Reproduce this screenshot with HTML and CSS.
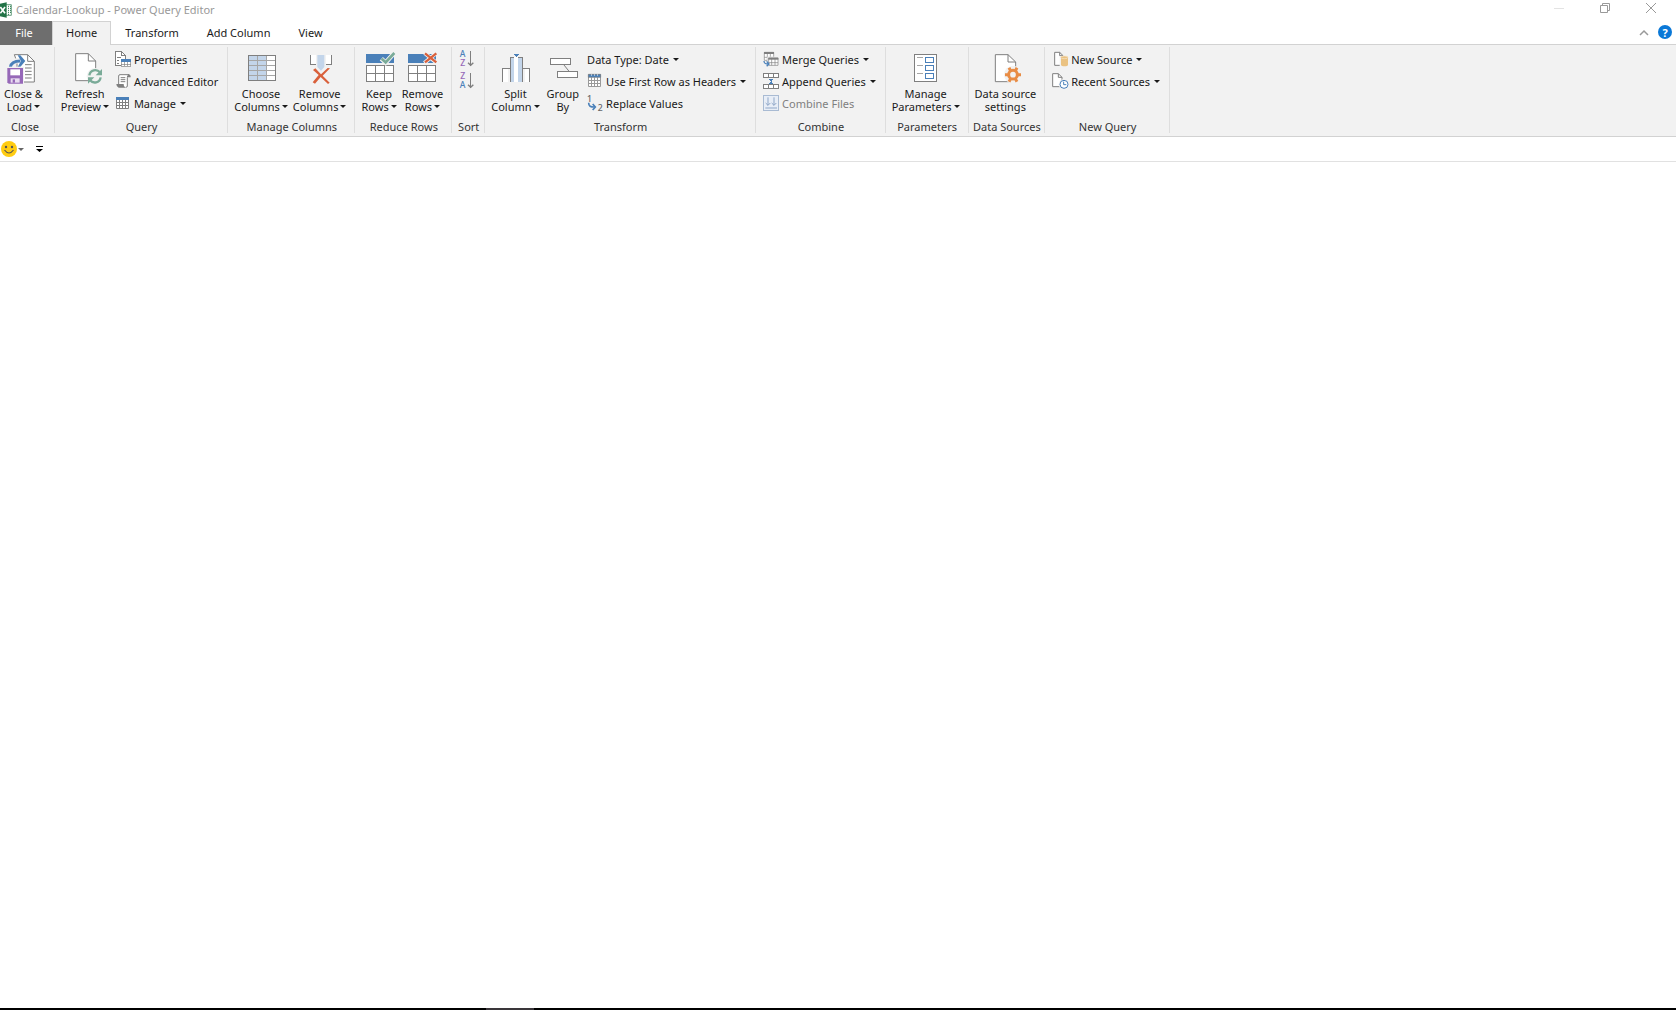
FILE: index.html
```html
<!DOCTYPE html>
<html lang="en">
<head>
<meta charset="utf-8">
<title>Calendar-Lookup - Power Query Editor</title>
<link rel="stylesheet" href="styles.css">
</head>
<body>
<header class="titlebar">
  <svg class="app-icon" viewBox="0 0 36 48" aria-hidden="true"><path fill="#fff" stroke="#217346" stroke-width="2" d="M14 8h20v32H14z"/><path stroke="#217346" stroke-width="3" d="M24 13h3M24 19h3M24 25h3M24 31h3M24 37h3M30 13h3M30 19h3M30 25h3M30 31h3"/><path fill="#217346" d="M0 5l20-4v46L0 43z"/><path stroke="#fff" stroke-width="5" d="M1 15l14 19M15 15L1 34"/></svg>
  <h1 class="title">Calendar-Lookup - Power Query Editor</h1>
  <div class="window-controls">
    <button class="win-btn" aria-label="Minimize" disabled><svg viewBox="0 0 10 10"><path stroke="#e3e3e3" d="M0 5.500h10"/></svg></button>
    <button class="win-btn" aria-label="Restore"><svg viewBox="0 0 10 10"><path fill="none" stroke="#999" d="M.5 2.500h7v7h-7zM2.500 2.500v-2h7v7h-2"/></svg></button>
    <button class="win-btn" aria-label="Close"><svg viewBox="0 0 10 10"><path stroke="#999" d="M0 0l10 10M10 0L0 10"/></svg></button>
  </div>
</header>

<nav class="tabs" aria-label="Ribbon tabs">
  <button class="tab tab-file">File</button>
  <button class="tab tab-active">Home</button>
  <button class="tab">Transform</button>
  <button class="tab">Add Column</button>
  <button class="tab">View</button>
  <div class="tab-tools">
    <button class="tool" aria-label="Collapse ribbon"><svg class="chevron" viewBox="0 0 8 5"><path fill="none" stroke="#999" stroke-width="1.500" d="M0 5l4-4 4 4"/></svg></button>
    <button class="tool help" aria-label="Help">?</button>
  </div>
</nav>

<main class="ribbon">
  <section class="group">
    <div class="items">
      <button class="big">
        <svg class="icon-lg" viewBox="0 0 96 96"><path fill="#fff" stroke="#7f7f7f" stroke-width="3" d="M22 8h40l20 20v62H30V30z"/><path fill="none" stroke="#7f7f7f" stroke-width="3" d="M62 8v20h20M54 38h20M54 48h20M54 58h20M54 68h20M54 78h20"/><path fill="none" stroke="#f2f2f2" stroke-width="16" d="M9 46c2-16 12-20 28-20"/><path fill="none" stroke="#4a80b9" stroke-width="9" d="M10 46c2-14 12-19 30-19"/><path fill="#4a80b9" d="M32 10h8l15 17-15 18h-8l10-18z"/><path fill="#f2f2f2" d="M-2 44h53v54H-2z"/><path fill="#9668b8" d="M1 48h47v47H5l-4-4z"/><path fill="#fff" d="M10 52h29v18H10z"/><path fill="#e8dcf0" d="M11 79h27v13H11z"/><path fill="#9668b8" d="M17 82h7v10h-7z"/></svg>
        <span class="label">Close &amp;<br>Load<i class="caret"></i></span>
      </button>
    </div>
    <h2 class="group-name">Close</h2>
  </section>

  <section class="group">
    <div class="items">
      <button class="big">
        <svg class="icon-lg" viewBox="0 0 96 96"><path fill="#fff" stroke="#7f7f7f" stroke-width="3" d="M20 5h38l22 22v59H20z"/><path fill="none" stroke="#7f7f7f" stroke-width="3" d="M58 5v22h22"/><circle cx="78" cy="73" r="25" fill="#f2f2f2"/><path fill="none" stroke="#7aab98" stroke-width="7" d="M61 70c3-17 22-20 32-9M95 76c-3 17-22 20-32 9"/><path fill="#7aab98" d="M99 51v19H80zM57 95V76h19z"/></svg>
        <span class="label">Refresh<br>Preview<i class="caret"></i></span>
      </button>
      <div class="stack">
        <button class="small"><svg class="icon-sm crisp" viewBox="0 0 48 48"><path fill="#fff" stroke="#7f7f7f" stroke-width="3" d="M2 2h18l11 11v31H2z"/><path fill="none" stroke="#7f7f7f" stroke-width="3" d="M20 2v11h11M6 18h5M6 27h5M6 36h5M13 18h5"/><path fill="#fff" stroke="#7f7f7f" stroke-width="2" d="M19 25h28v21H19zM19 39h28M28 25v21M38 25v21"/><path fill="#4a80b9" d="M18 24h30v8H18z"/></svg>Properties</button>
        <button class="small"><svg class="icon-sm" viewBox="0 0 48 48"><path fill="#fff" stroke="#7f7f7f" stroke-width="3" d="M11 36V9q0-4 4-4h27q-5 2-5 8v26q0 4-5 4"/><path fill="#7f7f7f" d="M41 4q6 0 6 9h-9q0-9 3-9zM4 33h22q-1 8 6 11H11q-7-2-7-11z"/><path stroke="#7f7f7f" stroke-width="3" d="M17 14h14M17 20h14M17 26h14"/></svg>Advanced Editor</button>
        <button class="small"><svg class="icon-sm" viewBox="0 0 48 48"><path fill="#fff" stroke="#7f7f7f" stroke-width="3" d="M4.500 7.500h36v33h-36zM4.500 22.500h36M4.500 31.500h36M13.500 14v27M22.500 14v27M31.500 14v27"/><path fill="#4a80b9" d="M3 6h39v9H3z"/></svg>Manage<i class="caret"></i></button>
      </div>
    </div>
    <h2 class="group-name">Query</h2>
  </section>

  <section class="group">
    <div class="items">
      <button class="big">
        <svg class="icon-lg crisp" viewBox="0 0 96 96"><path fill="#fff" d="M8 10h84v77H8z"/><path fill="#c3d5ea" d="M8 10h56v77H8z"/><path fill="none" stroke="#a6a6a6" stroke-width="3" d="M9 26h81M9 41h81M9 56h81M9 71h81M37 11v75M64 11v75"/><path fill="none" stroke="#7f7f7f" stroke-width="3" d="M10 11h81v75H10z"/></svg>
        <span class="label">Choose<br>Columns<i class="caret"></i></span>
      </button>
      <button class="big">
        <svg class="icon-lg" viewBox="0 0 96 96"><path fill="#fff" d="M20 9h63v29H20z"/><path fill="#f2f2f2" d="M36 9h30v32H36z"/><path class="crisp" fill="none" stroke="#7f7f7f" stroke-width="3" d="M20 9v28h16M82 9v28H66"/><path fill="#c3d5ea" d="M40 9h21v36L51 56 40 45z"/><path fill="#d9603b" d="M27 54l7-5 17 18 20-19 7 1-22 22 21 21-5 4-22-21-17 20-7-4 18-22z"/></svg>
        <span class="label">Remove<br>Columns<i class="caret"></i></span>
      </button>
    </div>
    <h2 class="group-name">Manage Columns</h2>
  </section>

  <section class="group">
    <div class="items">
      <button class="big">
        <svg class="icon-lg" viewBox="0 0 96 96"><path fill="#4a80b9" d="M9 6h84v27H9z"/><path class="crisp" fill="#fff" stroke="#7f7f7f" stroke-width="3" d="M10 41h81v47H10zM10 65h81M37 41v47M64 41v47"/><path fill="none" stroke="#f2f2f2" stroke-width="14" d="M55 20l13 12L94 2"/><path fill="none" stroke="#7aab98" stroke-width="8" d="M56 20l12 11L94 3"/></svg>
        <span class="label">Keep<br>Rows<i class="caret"></i></span>
      </button>
      <button class="big">
        <svg class="icon-lg" viewBox="0 0 96 96"><path fill="#4a80b9" d="M6 6h84v27H6z"/><path class="crisp" fill="#fff" stroke="#7f7f7f" stroke-width="3" d="M7 41h81v47H7zM7 65h81M34 41v47M61 41v47"/><path stroke="#f2f2f2" stroke-width="12" d="M56 3l36 30M92 2L55 33"/><path stroke="#d9603b" stroke-width="7" d="M57 4l34 27M91 4L57 31"/></svg>
        <span class="label">Remove<br>Rows<i class="caret"></i></span>
      </button>
    </div>
    <h2 class="group-name">Reduce Rows</h2>
  </section>

  <section class="group">
    <div class="items">
      <div class="stack">
        <button class="small" aria-label="Sort ascending"><svg class="icon-sm" viewBox="0 0 48 48"><text class="sort-letter blue" x="11" y="18">A</text><text class="sort-letter purple" x="11" y="46">Z</text><path class="crisp" stroke="#7f7f7f" stroke-width="3" d="M34.500 0v44"/><path fill="none" stroke="#7f7f7f" stroke-width="4" d="M27 35l8 8 8-8"/></svg></button>
        <button class="small" aria-label="Sort descending"><svg class="icon-sm" viewBox="0 0 48 48"><text class="sort-letter purple" x="11" y="18">Z</text><text class="sort-letter blue" x="11" y="46">A</text><path class="crisp" stroke="#7f7f7f" stroke-width="3" d="M34.500 0v44"/><path fill="none" stroke="#7f7f7f" stroke-width="4" d="M27 35l8 8 8-8"/></svg></button>
      </div>
    </div>
    <h2 class="group-name">Sort</h2>
  </section>

  <section class="group">
    <div class="items items-wide">
      <button class="big">
        <svg class="icon-lg crisp" viewBox="0 0 96 96"><path fill="#fff" stroke="#7f7f7f" stroke-width="3" d="M10 90V49h20v41M73 90V49h19v41"/><path fill="#f2f2f2" d="M26 52h8v40h-8zM70 52h7v40h-7z"/><path fill="#c3d5ea" d="M34 16h36v74H34z"/><path fill="#fff" d="M46 16h12v74H46z"/><path fill="none" stroke="#7f7f7f" stroke-width="3" d="M35 90V17h11M69 90V17H58"/><path fill="#4a80b9" d="M43 6h18l-9 9z"/></svg>
        <span class="label">Split<br>Column<i class="caret"></i></span>
      </button>
      <button class="big">
        <svg class="icon-lg" viewBox="0 0 96 96"><path stroke="#7f7f7f" stroke-width="3" d="M51 39l16 20"/><path class="crisp" fill="#fff" stroke="#7f7f7f" stroke-width="3" d="M10 20h60v18H10zM32 59h60v18H32z"/></svg>
        <span class="label">Group<br>By</span>
      </button>
      <div class="stack">
        <button class="small">Data Type: Date<i class="caret"></i></button>
        <button class="small"><svg class="icon-sm" viewBox="0 0 48 48"><path fill="#fff" stroke="#999" stroke-width="3" d="M4.500 4.500h36v36h-36zM4.500 22.500h36M4.500 31.500h36M13.500 13v28M22.500 13v28M31.500 13v28"/><path fill="#4a80b9" stroke="#7f7f7f" stroke-width="2" d="M4 4h37v9H4z"/><path stroke="#fff" stroke-width="3" d="M12 6h3M21 6h3M30 6h3"/></svg>Use First Row as Headers<i class="caret"></i></button>
        <button class="small"><svg class="icon-sm" viewBox="0 0 48 48"><text class="digit" x="0" y="20">1</text><text class="digit" x="32" y="47">2</text><path fill="none" stroke="#4a80b9" stroke-width="5" d="M5 23c0 11 5 13 18 13"/><path fill="none" stroke="#4a80b9" stroke-width="5" d="M17 27l8 9-8 9"/></svg>Replace Values</button>
      </div>
    </div>
    <h2 class="group-name">Transform</h2>
  </section>

  <section class="group">
    <div class="items">
      <div class="stack">
        <button class="small"><svg class="icon-sm" viewBox="0 0 48 48"><path fill="#fff" stroke="#7f7f7f" stroke-width="2" d="M4 4h28v24H4zM4 19h28M13 4v24M22 4v24"/><path fill="#7f7f7f" d="M3 3h30v6H3z"/><path fill="#f2f2f2" d="M13 17h35v31H13z"/><path fill="#fff" stroke="#7f7f7f" stroke-width="2" d="M17 21h28v22H17zM17 35h28M26 21v22M36 21v22"/><path fill="#7f7f7f" d="M16 20h30v6H16z"/><path fill="none" stroke="#4a80b9" stroke-width="4" d="M3 30c0 8 4 9 14 9M11 31l7 8-7 7"/></svg>Merge Queries<i class="caret"></i></button>
        <button class="small"><svg class="icon-sm crisp" viewBox="0 0 48 48"><path fill="#fff" stroke="#7f7f7f" stroke-width="3" d="M1 2h46v11H1zM16 2v11M32 2v11M1 35h46v11H1zM16 35v11M32 35v11"/><path stroke="#4a80b9" stroke-width="3" d="M24 17v15"/><path fill="#4a80b9" d="M16 17h16l-8 7zM16 33h16l-8-7z"/></svg>Append Queries<i class="caret"></i></button>
        <button class="small" disabled><svg class="icon-sm" viewBox="0 0 48 48"><path class="crisp" fill="#e8eef7" stroke="#a9bbd3" stroke-width="3" d="M1 1h46v46H1z"/><path fill="none" stroke="#8fa7c8" stroke-width="3" d="M15 7v24M8 24l7 7 7-7M33 7v24M26 24l7 7 7-7M7 39h35"/></svg>Combine Files</button>
      </div>
    </div>
    <h2 class="group-name">Combine</h2>
  </section>

  <section class="group">
    <div class="items">
      <button class="big">
        <svg class="icon-lg crisp" viewBox="0 0 96 96"><path fill="#fff" stroke="#7f7f7f" stroke-width="3" d="M14 8h66v81H14z"/><path stroke="#a6a6a6" stroke-width="3" d="M21 17h18M21 41h18M21 65h18"/><path fill="none" stroke="#4a80b9" stroke-width="3" d="M47 17h23v14H47zM47 41h23v14H47zM47 65h23v14H47z"/></svg>
        <span class="label">Manage<br>Parameters<i class="caret"></i></span>
      </button>
    </div>
    <h2 class="group-name">Parameters</h2>
  </section>

  <section class="group">
    <div class="items">
      <button class="big">
        <svg class="icon-lg" viewBox="0 0 96 96"><path fill="#fff" stroke="#7f7f7f" stroke-width="3" d="M19 8h38l23 22v59H19z"/><path fill="none" stroke="#7f7f7f" stroke-width="3" d="M57 8v22h23"/><circle cx="72" cy="68" r="27" fill="#f2f2f2"/><circle cx="72" cy="68" r="13" fill="none" stroke="#e88c45" stroke-width="9"/><path stroke="#e88c45" stroke-width="9" d="M48 68h9M87 68h9M60 47l5 9M79 80l5 9M84 47l-5 9M65 80l-5 9"/></svg>
        <span class="label">Data source<br>settings</span>
      </button>
    </div>
    <h2 class="group-name">Data Sources</h2>
  </section>

  <section class="group">
    <div class="items">
      <div class="stack">
        <button class="small"><svg class="icon-sm" viewBox="0 0 48 48"><path fill="#fff" stroke="#7f7f7f" stroke-width="3" d="M8 4h15l10 10v29H8z"/><path fill="none" stroke="#7f7f7f" stroke-width="3" d="M23 4v10h10"/><path fill="#f2f2f2" d="M23 15h26v33H23z"/><path fill="#eac282" d="M27 20v22c0 5 21 5 21 0V20z"/><ellipse cx="37" cy="19" rx="11" ry="4" fill="#eac282" stroke="#f8e6c8" stroke-width="2"/></svg>New Source<i class="caret"></i></button>
        <button class="small"><svg class="icon-sm" viewBox="0 0 48 48"><path fill="#fff" stroke="#7f7f7f" stroke-width="3" d="M2 2h17l11 11v28H2z"/><path fill="none" stroke="#7f7f7f" stroke-width="3" d="M19 2v11h11"/><circle cx="36" cy="34" r="16" fill="#f2f2f2"/><circle cx="36" cy="34" r="12" fill="#fff" stroke="#4a80b9" stroke-width="3"/><path fill="none" stroke="#4a80b9" stroke-width="3" d="M35 26v9h8"/></svg>Recent Sources<i class="caret"></i></button>
      </div>
    </div>
    <h2 class="group-name">New Query</h2>
  </section>
</main>

<div class="quick-access">
  <button class="quick" aria-label="Send feedback">
    <svg class="smiley" viewBox="0 0 16 16"><circle cx="8" cy="8" r="8" fill="#fc1"/><circle cx="5" cy="6" r="1.200" fill="#555"/><circle cx="11" cy="6" r="1.200" fill="#555"/><path fill="none" stroke="#555" stroke-width="1.200" d="M3.500 9q4.500 6 9 0"/></svg>
    <i class="caret caret-muted"></i>
  </button>
  <button class="quick" aria-label="Customize quick access"><svg class="more" viewBox="0 0 7 6"><path fill="#000" d="M0 0h7v1H0zM0 3h7L3.500 6z"/></svg></button>
</div>

<div class="workspace"></div>
<footer class="taskbar"><span class="taskbar-item"></span></footer>
</body>
</html>
```

FILE: styles.css
```css
* {
  box-sizing: border-box;
}

body {
  margin: 0;
  min-height: 100vh;
  display: flex;
  flex-direction: column;
  background: #fff;
  color: #1a1a1a;
  font: 11px/13px "Noto Sans", "Open Sans", sans-serif;
}

button {
  padding: 0;
  border: 0;
  background: none;
  color: inherit;
  font: inherit;
  white-space: nowrap;
}

svg {
  flex: none;
  overflow: visible;
}

.crisp {
  shape-rendering: crispEdges;
}

.titlebar {
  display: flex;
  align-items: center;
  height: 21px;
  padding-bottom: 2px;
}

.app-icon {
  width: 12px;
  height: 16px;
  margin-right: 4px;
}

.title {
  margin: 0;
  color: #999;
  font-size: 11px;
  font-weight: 400;
}

.window-controls {
  display: flex;
  margin-left: auto;
  padding: 0 2px 4px 0;
}

.win-btn {
  display: flex;
  justify-content: center;
  width: 46px;
}

.win-btn svg {
  width: 10px;
  height: 10px;
}

/* Tab strip: the active tab covers the strip's bottom line */
.tabs {
  display: flex;
  height: 24px;
  box-shadow: inset 0 -1px #d2d2d2;
}

.tab {
  padding: 0 14px 2px;
}

.tab-file {
  width: 52px;
  padding: 0 4px 2px 0;
  background: #6e6e6e;
  color: #fff;
}

.tab-active {
  padding: 0 13px 2px;
  border: 1px solid #d2d2d2;
  border-bottom: 0;
  background: #f2f2f2;
}

.tab-tools {
  display: flex;
  align-items: center;
  gap: 10px;
  margin-left: auto;
  padding: 0 4px 2px 0;
}

.tool {
  display: flex;
  align-items: center;
  justify-content: center;
}

.chevron {
  width: 8px;
  height: 5px;
}

.help {
  width: 14px;
  height: 14px;
  border-radius: 50%;
  background: #0a78d7;
  color: #fff;
  font-weight: 700;
}

.ribbon {
  display: flex;
  padding: 2px 0 3px;
  border-bottom: 1px solid #d2d2d2;
  background: #f2f2f2;
}

.group {
  display: flex;
  flex-direction: column;
  padding: 1px 6px 0 4px;
  border-right: 1px solid #dedede;
}

.group:first-child {
  padding: 1px 9px 0 2px;
}

.items {
  display: flex;
  gap: 1px;
  height: 72px;
}

.items-wide {
  gap: 3px;
}

.group-name {
  margin: 0 -3px 0 0;
  color: #333;
  font-size: 11px;
  font-weight: 400;
  line-height: 13px;
  text-align: center;
}

.big {
  display: flex;
  flex-direction: column;
  align-items: center;
  align-self: flex-start;
  gap: 3px;
  padding: 4px 2px 0;
}

.icon-lg {
  width: 32px;
  height: 32px;
}

.stack {
  display: flex;
  flex-direction: column;
  align-items: flex-start;
}

.small {
  display: flex;
  align-items: center;
  gap: 3px;
  height: 22px;
  padding: 0 3px;
}

.small:disabled {
  color: #7f7f7f;
}

.icon-sm {
  width: 16px;
  height: 16px;
}

.caret {
  display: inline-block;
  margin-left: 2px;
  border: solid transparent;
  border-width: 3px 3px 0;
  border-top-color: #1a1a1a;
  vertical-align: 3px;
}

.small .caret {
  margin-left: 1px;
}

.caret-muted {
  border-top-color: #666;
}

.sort-letter,
.digit {
  font-size: 26px;
  font-weight: 500;
  text-anchor: middle;
}

.digit {
  fill: #666;
  text-anchor: start;
}

.blue {
  fill: #4a80b9;
}

.purple {
  fill: #9668b8;
}

.quick-access {
  display: flex;
  align-items: center;
  gap: 12px;
  height: 25px;
  padding-left: 1px;
  border-bottom: 1px solid #e1e1e1;
}

.quick {
  display: flex;
  align-items: center;
}

.quick .caret {
  margin-left: 1px;
}

.smiley {
  width: 16px;
  height: 16px;
}

.more {
  width: 7px;
  height: 6px;
}

.workspace {
  flex: 1;
}

.taskbar {
  height: 2px;
  padding-left: 29%;
  background: #000;
}

.taskbar-item {
  display: block;
  width: 48px;
  height: 2px;
  background: #3a363a;
}
```
